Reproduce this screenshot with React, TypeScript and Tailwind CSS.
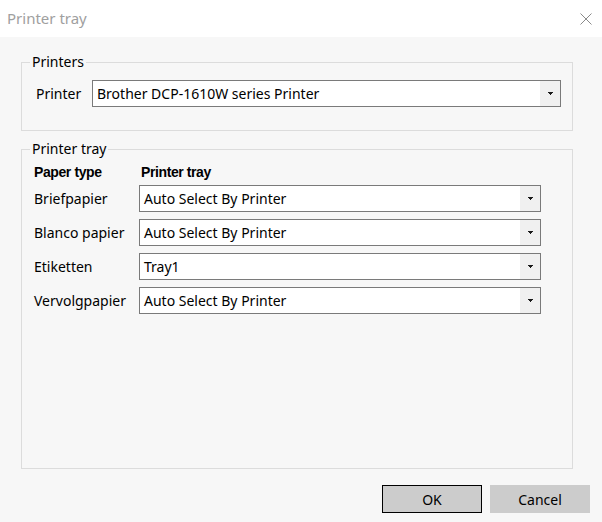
import React from 'react';

const font = { fontFamily: '"Segoe UI", "Noto Sans", "Liberation Sans", sans-serif' };

function Arrow() {
  return (
    <svg width="5" height="3" viewBox="0 0 5 3" className="block">
      <path d="M0 0h5v1H0zM1 1h3v1H1zM2 2h1v1H2z" fill="#1a1a1a" />
    </svg>
  );
}

function Select({ value, width }: { value: string; width: string }) {
  return (
    <div className={`flex h-[27px] ${width} border border-[#7a7a7a] bg-white`}>
      <div className="flex flex-1 items-center pl-[4px] text-[14px] text-black leading-none">{value}</div>
      <div className="flex w-[20px] items-center justify-center bg-[#f0f0f0]">
        <Arrow />
      </div>
    </div>
  );
}

function Group({ title, className, children }: { title: string; className: string; children: React.ReactNode }) {
  return (
    <div className={`relative border border-[#dcdcdc] ${className}`}>
      <span className="absolute left-[8px] top-[-11px] bg-[#f7f7f7] px-[2px] text-[14px] leading-[20px] text-black">
        {title}
      </span>
      {children}
    </div>
  );
}

const rows = [
  ['Briefpapier', 'Auto Select By Printer'],
  ['Blanco papier', 'Auto Select By Printer'],
  ['Etiketten', 'Tray1'],
  ['Vervolgpapier', 'Auto Select By Printer'],
];

export default function App() {
  return (
    <div className="flex h-[522px] w-[602px] flex-col bg-[#f7f7f7]" style={font}>
      {/* Title bar */}
      <div className="flex h-[37px] items-center justify-between bg-white pl-[7px] pr-[10px]">
        <span className="text-[15px] text-[#a0a0a0]">Printer tray</span>
        <svg width="12" height="12" viewBox="0 0 12 12">
          <path d="M0.5 0.5l11 11M11.5 0.5l-11 11" stroke="#8a8a8a" strokeWidth="1" />
        </svg>
      </div>

      <div className="flex flex-1 flex-col pl-[21px] pr-[29px] pt-[25px]">
        {/* Printers */}
        <Group title="Printers" className="h-[69px]">
          <div className="flex items-center pt-[17px] pl-[14px] pr-[11px]">
            <span className="w-[56px] text-[14px] text-black">Printer</span>
            <Select value="Brother DCP-1610W series Printer" width="flex-1" />
          </div>
        </Group>

        {/* Printer tray */}
        <Group title="Printer tray" className="mt-[18px] h-[320px]">
          <div className="flex flex-col pl-[12px] pt-[10px]">
            <div
              className="flex h-[25px] items-center text-[14px] font-bold text-black"
              style={{ fontFamily: '"Liberation Sans", Arial, sans-serif', letterSpacing: '-0.4px' }}
            >
              <span className="w-[107px]">Paper type</span>
              <span>Printer tray</span>
            </div>
            <div className="flex flex-col gap-[7px]">
              {rows.map(([label, value]) => (
                <div key={label} className="flex items-center">
                  <span className="w-[105px] text-[14px] text-black">{label}</span>
                  <Select value={value} width="w-[402px]" />
                </div>
              ))}
            </div>
          </div>
        </Group>

        {/* Buttons */}
        <div className="mt-[16px] -mr-[17px] flex justify-end gap-[8px]">
          <button className="h-[28px] w-[100px] border border-black bg-[#cccccc] text-[14px] text-black">OK</button>
          <button className="h-[28px] w-[100px] bg-[#cccccc] text-[14px] text-black">Cancel</button>
        </div>
      </div>
    </div>
  );
}
